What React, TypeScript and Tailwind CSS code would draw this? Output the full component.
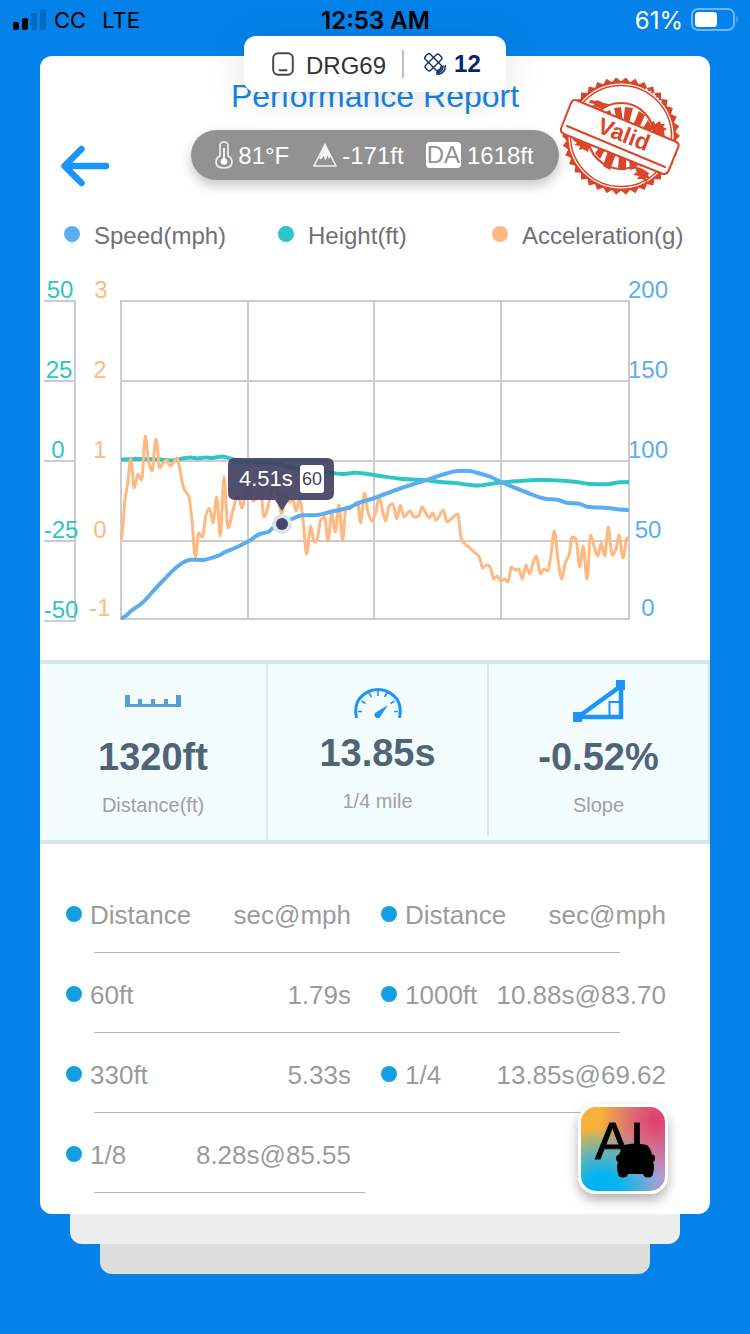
import React from "react";

type Point = [number, number];

const sans = "font-['Liberation_Sans',Arial,sans-serif]";

const acceleration: Point[] = [
  [121, 540], [125, 500], [127.7, 483], [130.7, 459], [134.3, 488], [138, 474], [141.7, 480], [145.3, 436],
  [148.7, 462], [152, 471], [156, 439], [159.7, 468], [163, 463], [166.7, 460], [170.3, 466], [177.3, 458],
  [180, 470], [184, 489], [188.7, 496], [191.7, 517], [195.3, 557], [198.7, 533], [202.3, 537], [206, 515],
  [209.3, 508], [213, 523], [216.7, 497], [220.3, 536], [224, 477], [228, 528], [233, 510], [238, 495],
  [242, 508], [248, 478], [253, 501], [257, 498], [260, 483], [264, 517], [270, 498], [273, 483],
  [277, 490], [281.7, 514], [285.7, 495], [289, 502], [293, 500], [296, 511], [299.5, 499], [302.7, 517],
  [306.7, 554], [310.7, 526], [314, 542], [317, 540], [320.7, 520], [324.7, 517], [328, 541], [331.7, 513],
  [335.3, 532], [339, 505], [342.7, 540], [346, 507], [349, 509], [352.7, 506], [357.3, 502], [360.7, 523],
  [364.3, 493], [368, 512], [372, 521], [375.7, 512], [379.3, 497], [382.7, 512], [385.7, 521], [389, 506],
  [393, 504], [396.7, 519], [400.3, 505], [404, 517], [410, 511], [414, 517], [418.7, 516], [422, 507],
  [425.7, 513], [429.3, 518], [432.7, 513], [436, 520], [443.3, 510], [447, 522], [453, 517], [457.7, 514],
  [461, 537], [463, 542], [470, 548], [473, 551], [479.3, 557], [482.7, 568], [486.7, 565], [490.3, 567],
  [493.7, 579], [497.3, 576], [501, 581], [504.7, 579], [508, 582], [511.3, 567], [515, 570], [518.7, 569],
  [522.3, 579], [526, 565], [529.7, 574], [533, 563], [536.3, 556], [540.3, 574], [544, 569], [547.7, 571],
  [550.7, 557], [554.3, 531], [558.3, 562], [561.7, 579], [565.3, 563], [569, 555], [572.3, 537], [576, 539],
  [579.7, 567], [583.3, 546], [587, 579], [590.7, 535], [594.3, 547], [597.7, 556], [601.3, 543], [604.7, 556],
  [608.3, 527], [612, 555], [615.7, 550], [619, 535], [623, 558], [627, 538], [629, 538],
];

const speed: Point[] = [
  [121, 618], [125, 616.5], [131, 611], [142, 603], [156, 588], [178, 566], [184, 562], [190, 559.7],
  [202, 560], [220, 555], [225, 552], [235, 548], [248, 541.5], [260, 534], [268, 532], [273, 528],
  [282, 524], [292, 519], [302, 515.3], [317, 515], [332, 511.5], [348, 508], [360, 502.5], [373, 498.5],
  [385, 494], [400, 488.5], [423, 481], [445, 474], [458, 471], [468, 471], [478, 473], [490, 476.7],
  [501, 482], [523, 491], [547, 499], [557, 499.7], [568, 503], [578, 503.4], [587, 506.7], [607, 508], [629, 510],
];

const height: Point[] = [
  [121, 459.6], [140, 459], [160, 459.4], [172, 460.5], [180, 459], [190, 457.6], [198, 458.4], [206, 457.4],
  [212, 458], [222, 456.6], [232, 459], [240, 461.5], [263, 463], [280, 464.5], [293, 468], [333, 473],
  [342, 474], [355, 472.8], [375, 475.2], [400, 478.7], [423, 480], [440, 482], [455, 483], [467, 484.6],
  [478, 485.6], [490, 484], [501, 482.5], [520, 481], [535, 480], [547, 480], [575, 481.8], [590, 484],
  [607, 484.2], [620, 482.2], [629, 482],
];

// Monotone cubic interpolation: tangents are flat at local extrema.
function smooth(points: Point[]): string {
  const slope = (i: number) => (points[i + 1][1] - points[i][1]) / (points[i + 1][0] - points[i][0]);
  const tangent = points.map((_, i) => {
    if (i === 0 || i === points.length - 1) return 0;
    const a = slope(i - 1);
    const b = slope(i);
    return a * b <= 0 ? 0 : (2 * a * b) / (a + b);
  });
  return points
    .map(([x, y], i) => {
      if (i === 0) return `M${x} ${y}`;
      const [px, py] = points[i - 1];
      const d = (x - px) / 3;
      return `C${px + d} ${py + tangent[i - 1] * d} ${x - d} ${y - tangent[i] * d} ${x} ${y}`;
    })
    .join("");
}

function StatusBar() {
  return (
    <div className="grid h-10 grid-cols-[1fr_auto_1fr] items-center pr-[11px] pl-3 font-['Inter',sans-serif] text-2xl text-black">
      <div className="flex items-center">
        <svg viewBox="0 0 34 22" className="mr-2 h-[22px] w-[34px]" aria-hidden="true">
          <rect x="1" y="13" width="6" height="8" rx="2" />
          <rect x="10" y="9" width="6" height="12" rx="2" />
          <rect x="19" y="4" width="6" height="17" rx="2" fill="#0269bc" />
          <rect x="28" y="0" width="6" height="21" rx="2" fill="#0269bc" />
        </svg>
        <div className="flex gap-4 pt-0.5 text-[22px]">
          <span>CC</span>
          <span>LTE</span>
        </div>
      </div>
      <div className="pt-0.5 font-semibold">12:53 AM</div>
      <div className="flex items-center justify-end gap-2 text-white">
        <span className="pt-0.5">61%</span>
        <svg viewBox="0 0 48 24" className="h-6 w-12" aria-hidden="true">
          <rect x="1" y="1" width="42" height="21" rx="6" fill="none" stroke="#6fb6f3" strokeWidth="2" />
          <rect x="4" y="4" width="22" height="15" rx="3.5" fill="#fff" />
          <path d="M45.5 7.5q2.5 4 0 8z" fill="#6fb6f3" />
        </svg>
      </div>
    </div>
  );
}

function DeviceBadge() {
  return (
    <div className="absolute top-9 left-1/2 z-10 flex h-14 w-[262px] -translate-x-1/2 items-center rounded-xl bg-white pl-7 text-2xl shadow-[0_4px_40px_rgba(0,0,0,0.12)]">
      <svg viewBox="0 0 22 24" className="mr-3 h-6 w-[22px]" fill="none" stroke="#4a4a4a" strokeWidth="2" aria-hidden="true">
        <rect x="1.2" y="1.2" width="19.6" height="21.6" rx="5" />
        <path d="M7.5 18.3h7" strokeLinecap="round" />
      </svg>
      <span className="mt-1 text-[#333]">DRG69</span>
      <span className="mr-5 ml-4 h-7 w-0.5 bg-[#bdbdbd]" />
      <svg viewBox="0 0 22 22" className="mr-2 h-[22px] w-[22px]" fill="none" stroke="#143172" strokeWidth="1.4" strokeLinecap="round" aria-hidden="true">
        <g transform="rotate(45 9.500 9.500)">
          <rect x="-0.500" y="6" width="20" height="7" rx="2" />
          <path d="M6 6V2q0-2 2-2h3q2 0 2 2v4M6 13v4q0 2 2 2h3q2 0 2-2v-4M6 6v7M13 6v7" />
        </g>
        <path d="M17 13.500q-.5 3.500-4 4M19.300 13q-.3 6.300-6.800 7M21.300 12.500q.2 8.300-8.300 9" />
      </svg>
      <span className="font-bold text-[#06256a]">12</span>
    </div>
  );
}

function ValidStamp() {
  const teeth = 38;
  const outline = Array.from({ length: teeth * 2 }, (_, i) => {
    const r = i % 2 ? 54.5 : 59;
    const a = (i * Math.PI) / teeth;
    return `${(61 + r * Math.cos(a)).toFixed(1)},${(58 + r * Math.sin(a)).toFixed(1)}`;
  }).join(" ");
  const red = "#d9462a";
  return (
    <svg viewBox="0 0 120 118" className="mt-[22px] ml-px h-[118px] w-[120px]" role="img" aria-label="Valid">
      <polygon points={outline} fill={red} />
      <circle cx="61" cy="58" r="53.500" fill="#fff" stroke={red} strokeWidth="2" />
      <circle cx="61" cy="58" r="50.500" fill="none" stroke={red} strokeWidth="1.500" />
      <g fill={red}>
        <path d="M30 22l6 1 1-1 7 3 5 1-1 3 6 3-6 1-9-3-7-2 3-2-6-1zM90 45l4-2 1 3 5-3 1 3 4 0-2 3 4 2-3 2 1 7-6-2-11-5-3-3z" />
        <path d="M11 55l9 4 7 1 6 4 10 2-2 4-6-1 1 3-7-2-1 4-5-3-4 1 1-4-6-1 3-2-4-3zM74 88l9 3 6 4-1 3 3 2-5 0 2 5-6-4-5 0 2-3-6-1 4-3z" />
      </g>
      <circle cx="61" cy="58" r="33" fill="#fff" stroke={red} strokeWidth="2.200" />
      <g fill={red}>
        <path d="M54 30l7-1 2 16-6-2zM65 29l8 1-5 19-5-2zM79 33l6 4-8 18-6-3zM43 35l7-3 4 12-6-2zM88 42l5 9-6 4-6-2z" />
        <path d="M39 70l6 2-5 9-5-6zM48 73l8 3-6 16-7-4zM59 76l7 2 0 14-8 0zM69 80l6 2 2 8-7 2zM78 84l6 2-4 3z" />
      </g>
      <path d="M17 22.500 115.500 63.500q4 2 3 5L108.500 93q-2 4-6 2.700L3.800 56q-4-2-2.600-6L11 25q2-4 6-2.500z" fill="#fff" stroke={red} strokeWidth="2" />
      <path d="M7 48 105 89" stroke={red} strokeWidth="2" strokeLinecap="round" />
      <text x="36" y="54" transform="rotate(21 36 54)" className="font-['Liberation_Sans',Arial,sans-serif] text-[23px] font-bold" fill={red}>Valid</text>
      <path d="M86 11l10 6M94 17l9 8M13 92l8 9" stroke="#fff" strokeWidth="1.500" strokeDasharray="2 2" />
    </svg>
  );
}

function Header() {
  return (
    <header className="grid grid-cols-[1fr_auto_1fr] items-start">
      <button type="button" aria-label="Back" className="mt-[88px] ml-5 h-11 w-[50px]">
        <svg viewBox="0 0 50 44" className="h-11 w-[50px]" fill="none" stroke="#1b94fb" strokeWidth="6.500" strokeLinecap="round" strokeLinejoin="round" aria-hidden="true">
          <path d="M46 22H5M21.500 5 4.500 22 21.500 39" />
        </svg>
      </button>
      <div className="flex flex-col items-center pt-5">
        <h1 className="mb-[14px] text-[32px] leading-10 text-[#1485e8]">Performance Report</h1>
        <div className="flex h-[50px] items-center rounded-full bg-[#929292] pr-[25px] pl-6 text-2xl text-white shadow-[0_6px_12px_rgba(0,0,0,0.22)]">
          <svg viewBox="0 0 18 28" className="mr-[5px] h-7 w-[18px]" fill="none" stroke="#f1f1f1" strokeWidth="1.700" aria-hidden="true">
            <path d="M5 15V5q0-4 4-4t4 4v10q4 2 4 6 0 6-8 6t-8-6q0-4 4-6z" />
            <path d="M9 7v12" strokeWidth="2" />
            <circle cx="9" cy="20.500" r="3.300" fill="#fff" stroke="none" />
          </svg>
          <span className="mr-6 pt-0.5">81°F</span>
          <svg viewBox="0 0 24 24" className="mr-[5px] h-6 w-6" aria-hidden="true">
            <path d="M12 1.500 23 23H1z" fill="none" stroke="#f1f1f1" strokeWidth="1.500" />
            <path d="M12 1 18 13.500 16 16 14.500 12.500 12.500 17.500 10.500 13 8 16.500 6 15z" fill="#f5f5f5" />
          </svg>
          <span className="mr-[22px] pt-0.5">-171ft</span>
          <span className="mr-[6px] rounded bg-white px-px leading-[26px] text-[#929292]">DA</span>
          <span className="pt-0.5">1618ft</span>
        </div>
      </div>
      <ValidStamp />
    </header>
  );
}

function Legend() {
  const items = [
    { label: "Speed(mph)", color: "bg-[#5aaef0]" },
    { label: "Height(ft)", color: "bg-[#2cc5c8]" },
    { label: "Acceleration(g)", color: "bg-[#ffb980]" },
  ];
  return (
    <ul className="mt-6 grid grid-cols-3 pr-1 pl-6 text-2xl leading-8 text-[#6e7079]">
      {items.map((item) => (
        <li key={item.label} className="flex items-center gap-[14px] whitespace-nowrap">
          <span className={`mb-1 size-4 rounded-full ${item.color}`} />
          {item.label}
        </li>
      ))}
    </ul>
  );
}

function Chart() {
  return (
    <svg viewBox="40 252 670 408" className="w-full font-['Liberation_Sans',Arial,sans-serif] text-2xl" role="img" aria-label="Speed, height and acceleration over time">
      <g stroke="#ccc" strokeWidth="2" fill="none">
        <path d="M44 301H75V621H44M44 381H75M44 461H75M44 541H75" />
        <path d="M121 301H629V619H121zM121 381H629M121 461H629M121 541H629M248 301V619M374 301V619M501 301V619" />
      </g>
      <g fill="#2cc5c8" textAnchor="middle">
        <text x="60" y="298">50</text>
        <text x="59" y="378">25</text>
        <text x="58" y="458">0</text>
        <text x="61" y="538">-25</text>
        <text x="61" y="618">-50</text>
      </g>
      <g fill="#ffb980" textAnchor="middle">
        <text x="101" y="298">3</text>
        <text x="100" y="378">2</text>
        <text x="100" y="458">1</text>
        <text x="100" y="538">0</text>
        <text x="100" y="616">-1</text>
      </g>
      <g fill="#5aaef0" textAnchor="middle">
        <text x="648" y="298">200</text>
        <text x="648" y="378">150</text>
        <text x="648" y="458">100</text>
        <text x="648" y="538">50</text>
        <text x="648" y="616">0</text>
      </g>
      <g fill="none" strokeLinejoin="round" strokeLinecap="butt">
        <path d={smooth(height)} stroke="#2cc5c8" strokeWidth="4" />
        <path d={smooth(acceleration)} stroke="#ffb980" strokeWidth="3" />
        <path d={smooth(speed)} stroke="#5aaef0" strokeWidth="4" />
      </g>
      <path d="M235 458H327q7 0 7 7V493q0 7-7 7H289L282 511 275 500H235q-7 0-7-7V465q0-7 7-7z" fill="#414062" fillOpacity="0.92" />
      <text x="239" y="486" fill="#fff" fontSize="22">4.51s</text>
      <rect x="300" y="465" width="24" height="28" rx="3" fill="#fff" />
      <text x="312" y="485" fill="#414062" fontSize="18" textAnchor="middle">60</text>
      <circle cx="282" cy="524" r="10" fill="#dde3ec" />
      <circle cx="282" cy="524" r="6" fill="#414570" />
    </svg>
  );
}

function RulerIcon() {
  return (
    <svg viewBox="0 0 56 12" className="mb-[15px] h-3 w-14" fill="#5b9bd8" aria-hidden="true">
      <path d="M0 0h5v9h8V4h4v5h9V4h4v5h9V4h4v5h8V0h5v12H0z" />
    </svg>
  );
}

function GaugeIcon() {
  return (
    <svg viewBox="0 0 48 30" className="h-[30px] w-12" fill="none" stroke="#1b94fb" aria-hidden="true">
      <path d="M2.500 30Q-.5 15 8.500 7.500 15.500 1.500 24 1.500T39.500 7.500Q48.500 15 45.500 30" strokeWidth="3" />
      <path d="M24 3v5M15 5l2.500 4M33 5l-2.500 4M7.500 13l4 2.500M40.500 13l-4 2.500M4 23.500h4M44 23.500h-4" strokeWidth="1.600" />
      <path d="M34 17 27 27.500a3.300 3.300 0 1 1-4.500-3.600z" fill="#1b94fb" stroke="none" />
    </svg>
  );
}

function SlopeIcon() {
  return (
    <svg viewBox="0 0 52 42" className="h-[42px] w-[52px]" aria-hidden="true">
      <path d="M5 37 48 6V37z" fill="none" stroke="#1b94fb" strokeWidth="4.500" />
      <path d="M36.500 36V22H48" fill="none" stroke="#1b94fb" strokeWidth="2" />
      <path d="M43 0h9v10h-9zM0 32h9v10H0z" fill="#1b94fb" />
    </svg>
  );
}

type StatProps = { icon: React.ReactNode; value: string; label: string; className?: string };

function Stat({ icon, value, label, className = "" }: StatProps) {
  return (
    <div className={`flex flex-col items-center justify-end border-r-2 border-[#d9e4e7] pt-4 pb-[23px] ${className}`}>
      <div className="mb-[15px] flex items-end">{icon}</div>
      <div className="mb-4 text-[38px] leading-10 font-bold text-[#516376]">{value}</div>
      <div className="text-xl leading-6 text-[#a0a0a0]">{label}</div>
    </div>
  );
}

const splits = [
  ["60ft", "1.79s", "1000ft", "10.88s@83.70"],
  ["330ft", "5.33s", "1/4", "13.85s@69.62"],
  ["1/8", "8.28s@85.55", "", ""],
];

const rowClass =
  "grid grid-cols-[110fr_175fr_140fr_175fr] after:col-span-full after:ml-7 after:h-px after:bg-[#b5b5b5]";
const cellClass = "flex h-[79px] items-center gap-2 pt-1.5 font-normal whitespace-nowrap";

function Bullet() {
  return <span className="mb-1 size-4 rounded-full bg-[#129fe6]" />;
}

function Splits() {
  return (
    <table className="mt-[29px] block pr-[44px] pl-[26px] text-[26px] text-[#9b9b9b]">
      <thead className="block">
        <tr className={`${rowClass} after:mr-[46px]`}>
          <th className={cellClass}><Bullet />Distance</th>
          <th className={`${cellClass} justify-end`}>sec@mph</th>
          <th className={`${cellClass} pl-[30px]`}><Bullet />Distance</th>
          <th className={`${cellClass} justify-end`}>sec@mph</th>
        </tr>
      </thead>
      <tbody className="block">
        {splits.map(([d1, v1, d2, v2]) => (
          <tr key={d1} className={`${rowClass} ${d2 ? "after:mr-[46px]" : "after:mr-[301px]"}`}>
            <td className={cellClass}><Bullet />{d1}</td>
            <td className={`${cellClass} justify-end`}>{v1}</td>
            <td className={`${cellClass} pl-[30px]`}>{d2 && <Bullet />}{d2}</td>
            <td className={`${cellClass} justify-end`}>{v2}</td>
          </tr>
        ))}
      </tbody>
    </table>
  );
}

function AiButton() {
  return (
    <button
      type="button"
      aria-label="AI car assistant"
      className="absolute right-[42px] bottom-5 size-[90px] overflow-hidden rounded-[18px] border-[3px] border-white bg-[radial-gradient(circle_at_25%_100%,#00b4f0_15%,transparent_60%),radial-gradient(circle_at_90%_15%,#e0456f_5%,transparent_55%),radial-gradient(circle_at_10%_5%,#f9b03a_15%,transparent_75%),linear-gradient(to_right,#8fc0b0,#b79ccf)] shadow-[0_6px_12px_rgba(0,0,0,0.3)]"
    >
      <svg viewBox="0 0 84 84" className="size-full" aria-hidden="true">
        <text x="14" y="52" className="font-['Liberation_Sans',Arial,sans-serif] text-[52px]" stroke="#000" strokeWidth="0.800">AI</text>
        <path d="M43 38Q54 35 66 38 70 42 71 47.500q3 0 3 3.500t-2 4q2 5 0 11.500 0 4-5 4-4 0-5-3.500H47q-1 3.500-5 3.500-5 0-5-4-2-6.500 0-11.500-2-1-2-4t3-3.500q2-5.500 5-9.500z" />
      </svg>
    </button>
  );
}

export default function App() {
  return (
    <div className={`relative min-h-screen bg-[#0482ea] pb-[60px] ${sans}`}>
      <StatusBar />
      <DeviceBadge />
      <main className="relative mx-10 mt-4 rounded-xl bg-white pb-[21px]">
        <Header />
        <Legend />
        <Chart />
        <section className="grid grid-cols-[228fr_221fr_221fr] border-y-4 border-[#d9e4e7] bg-[#f3fcfd]">
          <Stat icon={<RulerIcon />} value="1320ft" label="Distance(ft)" />
          <Stat icon={<GaugeIcon />} value="13.85s" label="1/4 mile" className="mb-1" />
          <Stat icon={<SlopeIcon />} value="-0.52%" label="Slope" />
        </section>
        <Splits />
        <AiButton />
      </main>
      <div className="mx-[70px] h-[30px] rounded-b-xl bg-[#eee]" />
      <div className="mx-[100px] h-[30px] rounded-b-xl bg-[#ddd]" />
    </div>
  );
}
